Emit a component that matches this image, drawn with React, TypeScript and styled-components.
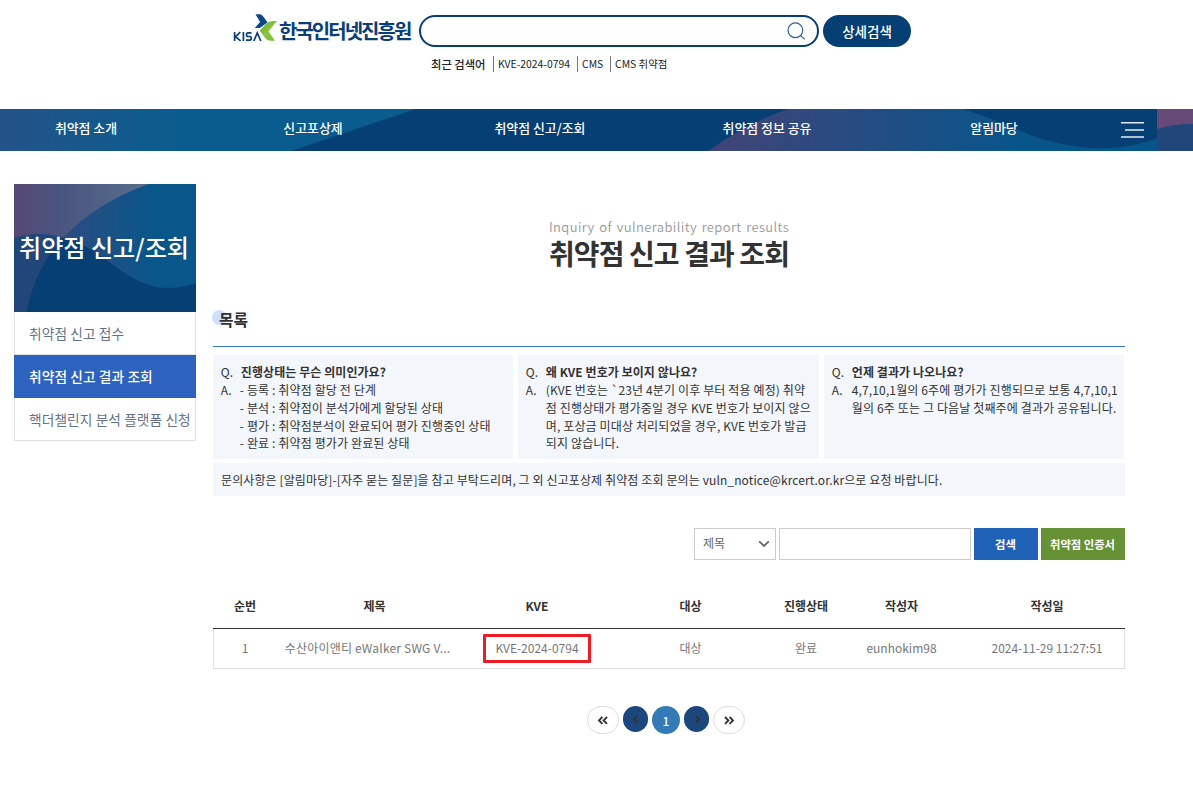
import React from 'react';
import styled, { createGlobalStyle } from 'styled-components';

const GlobalStyle = createGlobalStyle`
  *, *::before, *::after { box-sizing: border-box; }
  body {
    margin: 0;
    background: #fff;
    color: #333;
    font-family: "Noto Sans CJK KR", "Noto Sans", sans-serif;
    font-size: 12px;
  }
  button, input { font-family: inherit; margin: 0; }
  h1, h2, p, ul, dl, dd, dt { margin: 0; padding: 0; }
  ul { list-style: none; }
`;

const Page = styled.div`
  height: 808px;
  overflow: hidden;
`;

const Header = styled.header`
  display: flex;
  align-items: flex-start;
  height: 109px;
  padding: 13px 0 0 233px;
`;

const Logo = styled.div`
  display: flex;
  width: 186px;
  height: 32px;
`;

const LogoMark = styled.svg`
  flex: none;
  width: 46px;
  height: 32px;
`;

const LogoName = styled.span`
  margin-top: 3px;
  font-size: 20px;
  line-height: 30px;
  font-weight: 700;
  letter-spacing: -1.98px;
  color: #0b3f7b;
  white-space: nowrap;
`;

const SearchArea = styled.div`
  padding-top: 2px;
`;

const SearchRow = styled.div`
  display: flex;
  gap: 4px;
`;

const SearchBox = styled.div`
  display: flex;
  align-items: center;
  justify-content: flex-end;
  width: 400px;
  height: 32px;
  padding-right: 10px;
  border: 2px solid #063f73;
  border-radius: 16px;
`;

const DetailButton = styled.button`
  width: 88px;
  height: 32px;
  padding: 0;
  border: 0;
  border-radius: 16px;
  background: #063f73;
  color: #fff;
  font-size: 13.5px;
  font-weight: 500;
`;

const Recent = styled.div`
  display: flex;
  margin: 9px 0 0 12px;
  font-size: 10.4px;
  line-height: 16px;
  color: #222;
  white-space: nowrap;
`;

const RecentTitle = styled.span`
  width: 62px;
  font-weight: 500;
  font-size: 11.3px;
`;

const RecentItem = styled.span<{ $w: number }>`
  width: ${(p) => p.$w}px;
  padding-left: 4px;
  border-left: 1px solid #777;
`;

const Nav = styled.nav`
  position: relative;
  height: 42px;
  background: #063f73;
`;

const NavArt = styled.svg`
  position: absolute;
  inset: 0;
`;

const NavList = styled.ul`
  position: relative;
  display: flex;
  align-items: flex-start;
`;

const NavItem = styled.li<{ $first?: boolean }>`
  width: ${(p) => (p.$first ? 200 : 227)}px;
  padding-right: ${(p) => (p.$first ? 28 : 1)}px;
  text-align: center;
  font-size: 12.9px;
  font-weight: 500;
  line-height: 38px;
  color: #fff;
`;

const Burger = styled.svg`
  margin: 12px 0 0 13px;
`;

const Body = styled.main`
  display: flex;
  align-items: flex-start;
  padding-left: 14px;
`;

const Side = styled.aside`
  width: 182px;
  margin: 33px 17px 0 0;
`;

const SideHead = styled.div`
  position: relative;
  height: 128px;
`;

const SideArt = styled.svg`
  position: absolute;
  inset: 0;
`;

const SideTitle = styled.h2`
  position: relative;
  padding-right: 2px;
  font-size: 24.1px;
  font-weight: 500;
  line-height: 126px;
  color: #fff;
  text-align: center;
  white-space: nowrap;
`;

const SideItem = styled.li<{ $active?: boolean }>`
  height: 43px;
  padding-left: 14px;
  border: 1px solid ${(p) => (p.$active ? '#2d62be' : '#e0e1e3')};
  border-top-color: ${(p) => (p.$active ? '#2d62be' : 'transparent')};
  background: ${(p) => (p.$active ? '#2d62be' : '#fff')};
  background-clip: padding-box;
  color: ${(p) => (p.$active ? '#fff' : '#647486')};
  font-size: 13.7px;
  font-weight: ${(p) => (p.$active ? 500 : 400)};
  letter-spacing: 0.1px;
  line-height: 41px;
  white-space: nowrap;
`;

const Content = styled.section`
  width: 912px;
`;

const TitleBlock = styled.div`
  height: 151px;
  padding-top: 66px;
  text-align: center;
  white-space: nowrap;
`;

const Eyebrow = styled.p`
  font-size: 13px;
  font-weight: 350;
  line-height: 19px;
  letter-spacing: 0.4px;
  word-spacing: 1.4px;
  color: #999;
`;

const Title = styled.h1`
  font-size: 28px;
  line-height: 34px;
  font-weight: 700;
  letter-spacing: -0.9px;
  color: #333;
`;

const ListHeading = styled.h2`
  position: relative;
  height: 45px;
  padding: 7px 0 0 6px;
  border-bottom: 1px solid #337ab7;
  font-size: 15.8px;
  font-weight: 700;
  line-height: 22px;

  &::before {
    content: '';
    position: absolute;
    left: -1px;
    top: 8px;
    width: 15px;
    height: 15px;
    border-radius: 50%;
    background: #d0e0f8;
  }

  span { position: relative; }
`;

const FaqGrid = styled.div`
  display: grid;
  grid-template-columns: 300px 301px 300px;
  column-gap: 5px;
  margin-top: 8px;
`;

const Faq = styled.dl`
  display: grid;
  grid-template-columns: 20px 1fr;
  align-content: start;
  height: 104px;
  padding: 8.4px 0 0 7.8px;
  background: #f3f6fb;
  font-size: 12px;
  line-height: 17.7px;
  letter-spacing: 0.13px;
  color: #333;
  white-space: nowrap;
`;

const Question = styled.dt`
  font-weight: 700;
  letter-spacing: 0.07px;
`;

const Mark = styled.dt``;

const Answer = styled.dd<{ $dash?: boolean }>`
  margin-left: ${(p) => (p.$dash ? -1 : 0)}px;
`;

const Notice = styled.p`
  height: 33px;
  margin-top: 4px;
  padding-left: 8px;
  background: #f3f6fb;
  font-size: 12px;
  line-height: 34px;
  letter-spacing: 0.11px;
`;

const Filters = styled.div`
  display: flex;
  justify-content: flex-end;
  gap: 3px;
  margin-top: 32px;
`;

const Select = styled.div`
  display: flex;
  align-items: center;
  justify-content: space-between;
  width: 82px;
  height: 32px;
  padding: 0 5px 3px 8px;
  border: 1px solid #ccc;
  color: #666;
  font-size: 12px;

  svg { position: relative; top: 1.5px; }
`;

const Keyword = styled.input`
  width: 192px;
  height: 32px;
  border: 1px solid #ccc;
  background: #fff;
`;

const FilterButton = styled.button<{ $w: number; $color: string }>`
  width: ${(p) => p.$w}px;
  height: 32px;
  padding: 0 1px 1px 0;
  border: 0;
  background: ${(p) => p.$color};
  color: #fff;
  font-size: 11.3px;
  font-weight: 700;
  white-space: nowrap;
`;

const Table = styled.div`
  margin-top: 24px;
`;

const Row = styled.div<{ $head?: boolean }>`
  display: grid;
  grid-template-columns: 64px 195px 130px 177px 54px 137px 154px;
  align-items: center;
  height: ${(p) => (p.$head ? 45 : 40)}px;
  padding-bottom: ${(p) => (p.$head ? 0 : 1)}px;
  border-bottom: 1px solid ${(p) => (p.$head ? '#333' : '#ddd')};
  box-shadow: ${(p) => (p.$head ? 'none' : 'inset 1px 0 #e2e2e2, inset -1px 0 #e2e2e2')};
  color: ${(p) => (p.$head ? '#333' : '#777')};
  font-weight: ${(p) => (p.$head ? 700 : 400)};
  font-size: 12px;
  line-height: 18px;
  text-align: center;
  white-space: nowrap;
`;

const Cell = styled.span`
  display: flex;
  justify-content: center;
`;

const Subject = styled.span`
  padding-right: 14px;
  letter-spacing: 0.2px;
`;

const Highlight = styled.span`
  width: 108px;
  height: 29px;
  border: 3px solid #ed1c24;
  border-radius: 1px;
  line-height: 21.6px;
`;

const Pager = styled.div`
  display: flex;
  align-items: flex-start;
  gap: 4px;
  margin: 37px 0 0 374px;
`;

const PageButton = styled.button<{ $kind: 'edge' | 'step' | 'current' }>`
  display: flex;
  align-items: center;
  justify-content: center;
  width: ${(p) => ({ edge: 32, step: 25, current: 28 })[p.$kind]}px;
  height: ${(p) => (p.$kind === 'step' ? 26 : 28)}px;
  padding: 0;
  border: ${(p) => (p.$kind === 'edge' ? '1px solid #ddd' : '0')};
  border-radius: 14px;
  background: ${(p) => ({ edge: '#fff', step: '#1c477d', current: '#337ab7' })[p.$kind]};
  color: ${(p) => (p.$kind === 'current' ? '#fff' : '#333')};
  font-size: 12px;
  font-weight: 500;
`;

const Chevrons = ({ xs, flip }: { xs: number[]; flip?: boolean }) => (
  <svg width="12" height="10" viewBox="0 0 12 10" fill="none" stroke="#333" strokeWidth="1.9">
    <g transform={flip ? 'translate(12 0) scale(-1 1)' : undefined}>
      {xs.map((x) => (
        <path key={x} d={`M${x + 3.4} 2 L${x} 5.4 L${x + 3.4} 8.8`} />
      ))}
    </g>
  </svg>
);

const menu = ['취약점 소개', '신고포상제', '취약점 신고/조회', '취약점 정보 공유', '알림마당'];
const columns = ['순번', '제목', 'KVE', '대상', '진행상태', '작성자', '작성일'];
const entry = [
  '1',
  <Subject key="subject">수산아이앤티 eWalker SWG V...</Subject>,
  <Highlight key="kve">KVE-2024-0794</Highlight>,
  '대상',
  '완료',
  'eunhokim98',
  '2024-11-29 11:27:51',
];

const faqs = [
  {
    q: '진행상태는 무슨 의미인가요?',
    dash: true,
    a: ['- 등록 : 취약점 할당 전 단계', '- 분석 : 취약점이 분석가에게 할당된 상태', '- 평가 : 취약점분석이 완료되어 평가 진행중인 상태', '- 완료 : 취약점 평가가 완료된 상태'],
  },
  {
    q: '왜 KVE 번호가 보이지 않나요?',
    a: ['(KVE 번호는 `23년 4분기 이후 부터 적용 예정) 취약', '점 진행상태가 평가중일 경우 KVE 번호가 보이지 않으', '며, 포상금 미대상 처리되었을 경우, KVE 번호가 발급', '되지 않습니다.'],
  },
  {
    q: '언제 결과가 나오나요?',
    a: ['4,7,10,1월의 6주에 평가가 진행되므로 보통 4,7,10,1', '월의 6주 또는 그 다음날 첫째주에 결과가 공유됩니다.'],
  },
];

export default function App() {
  return (
    <Page>
      <GlobalStyle />
      <Header>
        <Logo>
          <LogoMark viewBox="0 0 46 32">
            <defs>
              <linearGradient id="leaf" x1="0" y1="0" x2="1" y2="1">
                <stop offset="0" stopColor="#5da53c" />
                <stop offset="0.5" stopColor="#8cc63f" />
                <stop offset="1" stopColor="#7fbc3c" />
              </linearGradient>
            </defs>
            <g fill="none" stroke="#0b3f7b" strokeWidth="1.7">
              <path d="M1.6 19v9M7.3 19.2L2.5 23.6L7.6 27.9M10.4 19v9M18.5 19.9h-3.6q-1.4 0-1.4 1.8t1.4 1.8h2q1.4 0 1.4 1.8t-1.4 1.8h-4" />
              <path d="M20.8 28L24.3 19.8L27.8 28" />
            </g>
            <path d="M22.5 1.3h4.2q2 .2 3.3 2l4.6 6.2q-1.7.8-3.3 2.3L26.8 15h-5l5.3-6z" fill="#0c4687" />
            <path d="M44 8h-3.5q-5 .2-8 3.4L26.8 17.6l5.3 7.4q2 2.8 5 2.8H42l-6.5-9.4z" fill="url(#leaf)" />
          </LogoMark>
          <LogoName>한국인터넷진흥원</LogoName>
        </Logo>
        <SearchArea>
          <SearchRow>
            <SearchBox>
              <svg width="20" height="20" viewBox="0 0 20 20" fill="none" stroke="#2f5c88" strokeWidth="1.2">
                <circle cx="8.4" cy="9.3" r="7.4" />
                <path d="M13.7 14.6L17.8 18.4" />
              </svg>
            </SearchBox>
            <DetailButton>상세검색</DetailButton>
          </SearchRow>
          <Recent>
            <RecentTitle>최근 검색어</RecentTitle>
            <RecentItem $w={84}>KVE-2024-0794</RecentItem>
            <RecentItem $w={33}>CMS</RecentItem>
            <RecentItem $w={70}>CMS 취약점</RecentItem>
          </Recent>
        </SearchArea>
      </Header>

      <Nav>
        <NavArt width="1193" height="42" viewBox="0 0 1193 42">
          <defs>
            <linearGradient id="navLeft" gradientUnits="userSpaceOnUse" x1="0" y1="0" x2="175" y2="0">
              <stop offset="0" stopColor="#235388" />
              <stop offset="1" stopColor="#0b5c8e" />
            </linearGradient>
            <linearGradient id="navRight" gradientUnits="userSpaceOnUse" x1="708" y1="0" x2="1020" y2="0">
              <stop offset="0" stopColor="#424375" />
              <stop offset="0.35" stopColor="#2d4a80" />
              <stop offset="1" stopColor="#08558a" />
            </linearGradient>
          </defs>
          <path d="M0 0H416Q350 22 291 42H0z" fill="url(#navLeft)" />
          <path d="M708 42Q750 13 788 0H964Q990 9 1018 21C1066 42 1118 45 1157 29V42z" fill="url(#navRight)" />
          <path d="M1157 0H1193V42H1157z" fill="#654a77" />
          <path d="M1157 20Q1172 15 1193 15V42H1157z" fill="#20467a" />
        </NavArt>
        <NavList>
          {menu.map((label, i) => (
            <NavItem key={label} $first={i === 0}>{label}</NavItem>
          ))}
          <Burger width="23" height="18" viewBox="0 0 23 18" stroke="#e3ebf2" strokeWidth="1.5">
            <path d="M0 1.7H23M4 8.9H23M0 16H23" />
          </Burger>
        </NavList>
      </Nav>

      <Body>
        <Side>
          <SideHead>
            <SideArt width="182" height="128" viewBox="0 0 182 128">
              <defs>
                <linearGradient id="sideTop">
                  <stop offset="0" stopColor="#574874" />
                  <stop offset="0.25" stopColor="#4a5480" />
                  <stop offset="0.75" stopColor="#576f8d" />
                </linearGradient>
                <linearGradient id="sideDisc" gradientUnits="userSpaceOnUse" x1="40" y1="0" x2="140" y2="0">
                  <stop offset="0" stopColor="#304b80" />
                  <stop offset="1" stopColor="#09568a" />
                </linearGradient>
                <clipPath id="discClip">
                  <path d="M135 0Q83 18 49 54Q20 85 13 128H182V0z" />
                </clipPath>
              </defs>
              <path d="M0 0H182V128H0z" fill="url(#sideTop)" />
              <path d="M0 54C22 47 43 50 62 58C85 67 104 88 129 99Q153 109 182 99V128H0z" fill="#20467a" />
              <g clipPath="url(#discClip)">
                <path d="M0 0H182V128H0z" fill="url(#sideDisc)" />
                <path d="M0 54C22 47 43 50 62 58C85 67 104 88 129 99Q153 109 182 99V128H0z" fill="#063f73" />
              </g>
            </SideArt>
            <SideTitle>취약점 신고/조회</SideTitle>
          </SideHead>
          <ul>
            <SideItem>취약점 신고 접수</SideItem>
            <SideItem $active>취약점 신고 결과 조회</SideItem>
            <SideItem>핵더챌린지 분석 플랫폼 신청</SideItem>
          </ul>
        </Side>

        <Content>
          <TitleBlock>
            <Eyebrow>Inquiry of vulnerability report results</Eyebrow>
            <Title>취약점 신고 결과 조회</Title>
          </TitleBlock>
          <ListHeading><span>목록</span></ListHeading>
          <FaqGrid>
            {faqs.map((f) => (
              <Faq key={f.q}>
                <Mark>Q.</Mark>
                <Question>{f.q}</Question>
                <Mark>A.</Mark>
                <Answer $dash={f.dash}>
                  {f.a.map((line) => (
                    <div key={line}>{line}</div>
                  ))}
                </Answer>
              </Faq>
            ))}
          </FaqGrid>
          <Notice>
            문의사항은 [알림마당]-[자주 묻는 질문]을 참고 부탁드리며, 그 외 신고포상제 취약점 조회 문의는 vuln_notice@krcert.or.kr으로 요청 바랍니다.
          </Notice>
          <Filters>
            <Select>
              제목
              <svg width="12" height="8" viewBox="0 0 12 8" fill="none" stroke="#666" strokeWidth="1.8">
                <path d="M1.2 1.4L6 6L10.8 1.4" />
              </svg>
            </Select>
            <Keyword />
            <FilterButton $w={64} $color="#2062b8">검색</FilterButton>
            <FilterButton $w={84} $color="#669135">취약점 인증서</FilterButton>
          </Filters>
          <Table>
            <Row $head>
              {columns.map((c) => (
                <Cell key={c}>{c}</Cell>
              ))}
            </Row>
            <Row>
              {entry.map((value, i) => (
                <Cell key={columns[i]}>{value}</Cell>
              ))}
            </Row>
          </Table>
          <Pager>
            <PageButton $kind="edge"><Chevrons xs={[2, 6.6]} /></PageButton>
            <PageButton $kind="step"><Chevrons xs={[4]} /></PageButton>
            <PageButton $kind="current">1</PageButton>
            <PageButton $kind="step"><Chevrons xs={[4]} flip /></PageButton>
            <PageButton $kind="edge"><Chevrons xs={[2, 6.6]} flip /></PageButton>
          </Pager>
        </Content>
      </Body>
    </Page>
  );
}
